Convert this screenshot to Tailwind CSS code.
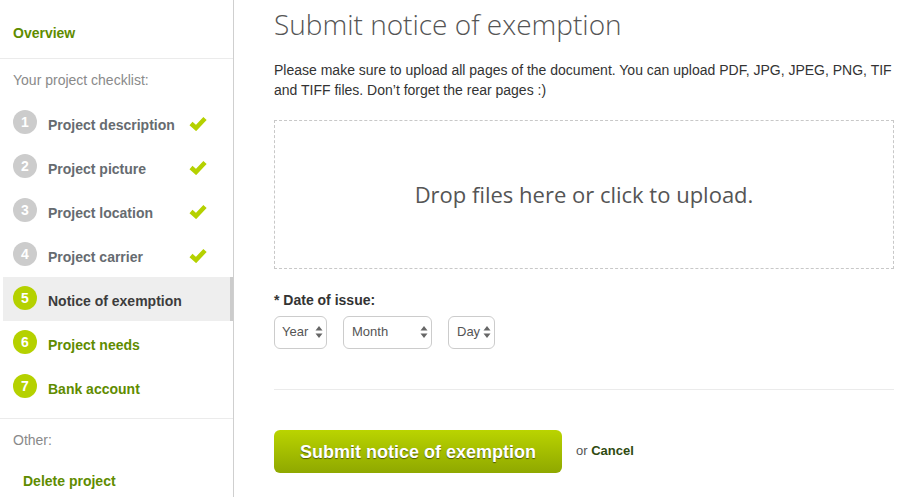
<!DOCTYPE html>
<html>
<head>
<meta charset="utf-8">
<title>Submit notice of exemption</title>
<script src="https://cdn.jsdelivr.net/npm/@tailwindcss/browser@4"></script>
</head>
<body class="bg-white font-['Liberation_Sans',Arial,sans-serif]">
<div class="flex h-[497px] w-[918px] overflow-hidden">

  <!-- Sidebar -->
  <aside class="w-[234px] shrink-0 border-r border-[#cfcfcf] flex flex-col text-sm">
    <div class="h-[59px] pl-[13px] pt-[25px] border-b border-[#ebebeb]">
      <a class="block leading-4 font-bold text-[#5f8c00]">Overview</a>
    </div>
    <p class="pl-[13px] pt-[13px] leading-4 text-[#8a8a8a]">Your project checklist:</p>

    <ul class="mt-[13px] pl-[3px]">
      <li class="h-11 flex items-center pl-[10px] font-bold text-[#666b70]">
        <span class="w-6 h-6 rounded-full bg-[#cccccc] text-white flex items-center justify-center mb-[2px]">1</span>
        <span class="ml-[11px] w-[141px] mt-[4px]">Project description</span>
        <svg class="w-[18px] h-[15px]" viewBox="0 0 18 15"><path d="M2 7.5 L7 12 L16 2.5" fill="none" stroke="#b5d100" stroke-width="4.5"/></svg>
      </li>
      <li class="h-11 flex items-center pl-[10px] font-bold text-[#666b70]">
        <span class="w-6 h-6 rounded-full bg-[#cccccc] text-white flex items-center justify-center mb-[2px]">2</span>
        <span class="ml-[11px] w-[141px] mt-[4px]">Project picture</span>
        <svg class="w-[18px] h-[15px]" viewBox="0 0 18 15"><path d="M2 7.5 L7 12 L16 2.5" fill="none" stroke="#b5d100" stroke-width="4.5"/></svg>
      </li>
      <li class="h-11 flex items-center pl-[10px] font-bold text-[#666b70]">
        <span class="w-6 h-6 rounded-full bg-[#cccccc] text-white flex items-center justify-center mb-[2px]">3</span>
        <span class="ml-[11px] w-[141px] mt-[4px]">Project location</span>
        <svg class="w-[18px] h-[15px]" viewBox="0 0 18 15"><path d="M2 7.5 L7 12 L16 2.5" fill="none" stroke="#b5d100" stroke-width="4.5"/></svg>
      </li>
      <li class="h-11 flex items-center pl-[10px] font-bold text-[#666b70]">
        <span class="w-6 h-6 rounded-full bg-[#cccccc] text-white flex items-center justify-center mb-[2px]">4</span>
        <span class="ml-[11px] w-[141px] mt-[4px]">Project carrier</span>
        <svg class="w-[18px] h-[15px]" viewBox="0 0 18 15"><path d="M2 7.5 L7 12 L16 2.5" fill="none" stroke="#b5d100" stroke-width="4.5"/></svg>
      </li>
      <li class="h-11 flex items-center pl-[10px] font-bold text-[#3c3c3c] bg-[#eeeeee] border-r-[3px] border-[#cccccc]">
        <span class="w-6 h-6 rounded-full bg-[#b5d100] text-white flex items-center justify-center mb-[2px]">5</span>
        <span class="ml-[11px] mt-[4px]">Notice of exemption</span>
      </li>
      <li class="h-11 flex items-center pl-[10px] font-bold text-[#5f8c00]">
        <span class="w-6 h-6 rounded-full bg-[#b5d100] text-white flex items-center justify-center mb-[2px]">6</span>
        <span class="ml-[11px] mt-[4px]">Project needs</span>
      </li>
      <li class="h-11 flex items-center pl-[10px] font-bold text-[#5f8c00]">
        <span class="w-6 h-6 rounded-full bg-[#b5d100] text-white flex items-center justify-center mb-[2px]">7</span>
        <span class="ml-[11px] mt-[4px]">Bank account</span>
      </li>
    </ul>

    <div class="mt-[9px] border-t border-[#ebebeb] pl-[13px] pt-[13px]">
      <p class="leading-4 text-[#8a8a8a]">Other:</p>
      <a class="block mt-[25px] ml-[10px] leading-4 font-bold text-[#5f8c00]">Delete project</a>
    </div>
  </aside>

  <!-- Main -->
  <main class="flex-1 pl-10 pr-6">
    <h1 class="font-['Open_Sans',sans-serif] font-light text-[28px] leading-10 pt-1 text-[#555555]">Submit notice of exemption</h1>
    <p class="mt-4 text-sm leading-5 text-[#333333]">Please make sure to upload all pages of the document. You can upload PDF, JPG, JPEG, PNG, TIF and TIFF files. Don’t forget the rear pages :)</p>

    <div class="mt-5 h-[149px] border border-dashed border-[#c8c8c8] flex items-center justify-center font-['Open_Sans',sans-serif] text-[22px] text-[#555555]">Drop files here or click to upload.</div>

    <label class="block mt-[23px] text-sm leading-4 font-bold text-[#333333]">* Date of issue:</label>

    <div class="mt-2 flex gap-4 text-[13px] text-[#555555]">
      <div class="relative">
        <select class="appearance-none w-[53px] h-[33px] pl-[7px] pb-[1px] border border-[#cccccc] rounded-md bg-white"><option>Year</option></select>
        <svg class="absolute right-[4px] top-[10px] w-[8px] h-[12px]" viewBox="0 0 8 12"><path d="M4 0 L7.5 4.5 H0.5 Z M4 12 L7.5 7.5 H0.5 Z" fill="#666666"/></svg>
      </div>
      <div class="relative">
        <select class="appearance-none w-[89px] h-[33px] pl-2 pb-[1px] border border-[#cccccc] rounded-md bg-white"><option>Month</option></select>
        <svg class="absolute right-[4px] top-[10px] w-[8px] h-[12px]" viewBox="0 0 8 12"><path d="M4 0 L7.5 4.5 H0.5 Z M4 12 L7.5 7.5 H0.5 Z" fill="#666666"/></svg>
      </div>
      <div class="relative">
        <select class="appearance-none w-[47px] h-[33px] pl-2 pb-[1px] border border-[#cccccc] rounded-md bg-white"><option>Day</option></select>
        <svg class="absolute right-[4px] top-[10px] w-[8px] h-[12px]" viewBox="0 0 8 12"><path d="M4 0 L7.5 4.5 H0.5 Z M4 12 L7.5 7.5 H0.5 Z" fill="#666666"/></svg>
      </div>
    </div>

    <hr class="mt-10 border-[#ebebeb]">

    <div class="mt-10 flex items-center">
      <button class="w-[288px] h-[43px] rounded-md bg-gradient-to-b from-[#bad400] to-[#8fa800] text-white text-lg font-bold [text-shadow:0_1px_1px_rgba(0,0,0,0.5)]">Submit notice of exemption</button>
      <span class="ml-[14px] mb-[2px] text-[13px] text-[#555555]">or <a class="font-bold text-[#2f4a10]">Cancel</a></span>
    </div>
  </main>
</div>
</body>
</html>
